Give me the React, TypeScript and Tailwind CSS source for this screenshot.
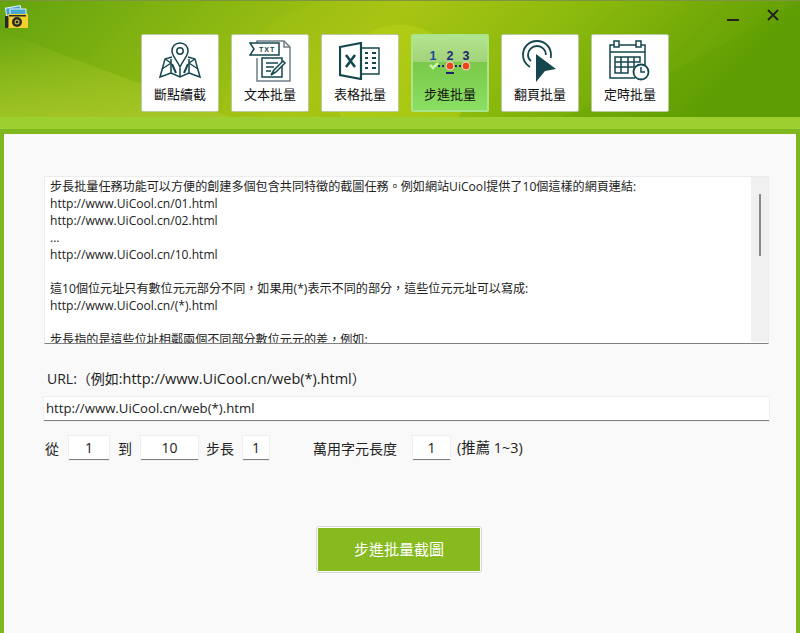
import type { ReactNode } from "react";

const stroke = "#14474e";

function MapIcon() {
  return (
    <svg width="42" height="38" viewBox="0 0 42 38" fill="none" stroke={stroke} strokeWidth="1.5">
      <path d="M21 1c-5 0-8 3.600-8 8 0 5 5 9 8 16 3-7 8-11 8-16 0-4.400-3-8-8-8z" />
      <circle cx="21" cy="9" r="3.200" />
      <path d="M13 15l-7 2-5 18 11-4 9 4 9-4 11 4-5-18-7-2" />
      <path d="M12 17v14M30 17v14M21 26v9M6 17l6 4M36 17l-6 4M3 27l9-6M39 27l-9-6" />
      <path d="M13 22l4 9M29 22l-4 9" strokeWidth="2" />
    </svg>
  );
}

function TextIcon() {
  return (
    <svg width="42" height="42" viewBox="0 0 42 42" fill="none" stroke="#6f7f84" strokeWidth="1.5">
      <path d="M8 6V1h27l6 6v34H8V18" />
      <path d="M35 1v6h6" />
      <path d="M1 3h29v12H1l4-6z" stroke={stroke} fill="#fff" />
      <text x="10" y="12" fontFamily="Liberation Sans" fontSize="7" fontWeight="700" fill={stroke} stroke="none" letterSpacing="1">TXT</text>
      <rect x="13" y="18" width="20" height="19" stroke={stroke} />
      <path d="M17 23h12M17 27h8M17 31h5" stroke={stroke} />
      <path d="M22 35l3-5 9-9 2 2-9 9z" stroke={stroke} fill="#fff" />
    </svg>
  );
}

function SheetIcon() {
  return (
    <svg width="42" height="38" viewBox="0 0 42 38" fill="none" stroke={stroke} strokeWidth="2.200">
      <path d="M1 5l21-4v36L1 33z" />
      <path d="M22 6h18v26H22" strokeWidth="1.400" />
      <path d="M7 13l9 12M16 13L7 25" strokeWidth="2.600" />
      <path d="M26 11h3M33 11h4M26 16h3M33 16h4M26 21h3M33 21h4M26 26h3M33 26h4" strokeWidth="2" />
    </svg>
  );
}

function StepIcon() {
  return (
    <svg width="44" height="26" viewBox="0 0 44 26">
      <g fontFamily="Liberation Sans" fontSize="12.500" fontWeight="700" textAnchor="middle">
        <text x="5" y="10" fill="#1d4aa0">1</text>
        <text x="22" y="10" fill="#1a2f7c">2</text>
        <text x="38" y="10" fill="#1a2470">3</text>
      </g>
      <path d="M10 16h8M27 16h7" stroke="#1a2470" strokeWidth="2" strokeDasharray="2 2" />
      <path d="M2 15l3 3 5-5" fill="none" stroke="#c9f5a8" strokeWidth="2.500" />
      <circle cx="22" cy="16" r="4" fill="#e8491b" stroke="#f7d9cc" />
      <circle cx="38" cy="16" r="4" fill="#e8491b" stroke="#f7d9cc" />
      <rect x="18" y="22" width="8" height="2" fill="#1a2470" />
    </svg>
  );
}

function ClickIcon() {
  return (
    <svg width="36" height="42" viewBox="0 0 36 42" fill="none" stroke={stroke} strokeWidth="1.800">
      <path d="M8 27C3 24 1 20 1 15 1 7 7 1 15 1s14 6 14 14c0 1-.1 2-.3 3" />
      <path d="M9 21c-2-1.500-3-3.500-3-6 0-5 4-9 9-9s9 4 9 9" />
      <path d="M14 14l20 15-11 2-9 11z" fill={stroke} stroke="none" />
    </svg>
  );
}

function CalendarIcon() {
  return (
    <svg width="42" height="42" viewBox="0 0 42 42" fill="none" stroke={stroke} strokeWidth="1.500">
      <path d="M26 38H1V5h35v20" />
      <path d="M1 12h35" />
      <rect x="5" y="1" width="5" height="6" fill="#fff" />
      <rect x="27" y="1" width="5" height="6" fill="#fff" />
      <path d="M6 17h25v5H6zM6 22h19v5H6zM6 27h13v6H6zM12 17v16M19 17v16M25 17v10" />
      <circle cx="32" cy="32" r="7.500" fill="#fff" strokeWidth="1.800" />
      <path d="M32 27v5h4" />
    </svg>
  );
}

function CameraLogo() {
  return (
    <svg width="24" height="24" viewBox="0 0 24 24">
      <rect x="2" y="3" width="15" height="8" fill="#3f9fd8" stroke="#dff0f8" transform="rotate(-10 9 7)" />
      <rect x="6" y="5" width="16" height="7" fill="#48a8d0" stroke="#dff0f8" />
      <rect x="4" y="10" width="22" height="15" rx="1" fill="#f4d02e" />
      <rect x="1" y="12" width="3.500" height="12" rx="1" fill="#27282a" />
      <rect x="5" y="11" width="17" height="1.500" fill="#27282a" />
      <circle cx="13" cy="18" r="5" fill="#2a2a20" />
      <circle cx="13" cy="18" r="2.500" fill="#c9b24a" />
      <circle cx="13" cy="18" r="1.300" fill="#222" />
    </svg>
  );
}

const tabs: { label: string; icon: ReactNode; active?: boolean }[] = [
  { label: "斷點續截", icon: <MapIcon /> },
  { label: "文本批量", icon: <TextIcon /> },
  { label: "表格批量", icon: <SheetIcon /> },
  { label: "步進批量", icon: <StepIcon />, active: true },
  { label: "翻頁批量", icon: <ClickIcon /> },
  { label: "定時批量", icon: <CalendarIcon /> },
];

function Tab({ label, icon, active }: { label: string; icon: ReactNode; active?: boolean }) {
  return (
    <div
      className={
        active
          ? "relative flex h-[78px] w-[78px] flex-col items-center overflow-hidden rounded-[2px] border-2 border-[#a9e58b] bg-gradient-to-b from-[#72bd3c] to-[#8adf62]"
          : "flex h-[78px] w-[78px] flex-col items-center rounded-[2px] border border-[#b9c9a0] bg-white"
      }
    >
      {active && <div className="absolute inset-x-0 top-0 h-[26px] bg-gradient-to-b from-[#b2e58e] to-[#a2d27a]" />}
      <div className={active ? "relative flex h-[50px] items-center pt-[3px]" : "flex h-[50px] items-center pt-[2px]"}>{icon}</div>
      <div className={active ? "relative text-[13px] leading-[17px] text-[#111]" : "relative mt-[1px] text-[13px] leading-[17px] text-[#111]"}>{label}</div>
    </div>
  );
}

function Field({ value, width }: { value: string; width: string }) {
  return (
    <div className={`flex h-[24px] items-center justify-center border-b border-[#808080] bg-white text-[14px] text-[#222] shadow-[0_0_0_1px_#efefef] ${width}`}>
      {value}
    </div>
  );
}

const helpLines = [
  "步長批量任務功能可以方便的創建多個包含共同特徵的截圖任務。例如網站UiCool提供了10個這樣的網頁連結:",
  "http://www.UiCool.cn/01.html",
  "http://www.UiCool.cn/02.html",
  "...",
  "http://www.UiCool.cn/10.html",
  "\u00a0",
  "這10個位元址只有數位元元部分不同，如果用(*)表示不同的部分，這些位元元址可以寫成:",
  "http://www.UiCool.cn/(*).html",
  "\u00a0",
  "步長指的是這些位址相鄰兩個不同部分數位元元的差，例如:",
];

export default function App() {
  return (
    <div
      className="relative flex h-[633px] w-[800px] flex-col overflow-hidden bg-[#7fb81e]"
      style={{ fontFamily: '"Open Sans", "Noto Sans CJK TC", sans-serif' }}
    >
      {/* header art */}
      <svg className="absolute left-0 top-0" width="800" height="117" viewBox="0 0 800 117" preserveAspectRatio="none">
        <defs>
          <linearGradient id="hdr" x1="0" y1="0" x2="1" y2="0.15">
            <stop offset="0" stopColor="#62a30f" />
            <stop offset="0.3" stopColor="#8db812" />
            <stop offset="0.5" stopColor="#a8c414" />
            <stop offset="0.72" stopColor="#84b60c" />
            <stop offset="1" stopColor="#4e9500" />
          </linearGradient>
          <linearGradient id="hdrLow" x1="0" y1="0" x2="0" y2="1">
            <stop offset="0" stopColor="#a8c82a" stopOpacity="0" />
            <stop offset="1" stopColor="#a8c82a" stopOpacity="0.8" />
          </linearGradient>
        </defs>
        <rect width="800" height="117" fill="url(#hdr)" />
        <path d="M0 30C100 70 160 90 230 117H0z" fill="url(#hdrLow)" />
        <path d="M220 117C230 50 270 10 330 0H800V117z" fill="#b0c816" opacity="0.2" />
        <circle cx="400" cy="90" r="65" fill="#bcd416" opacity="0.5" />
        <path d="M560 117C640 90 700 60 800 0V117z" fill="#4e9500" opacity="0.12" />
        <rect width="800" height="1" fill="#7f9440" />
      </svg>

      <div className="absolute left-[4px] top-[4px]">
        <CameraLogo />
      </div>
      <div className="absolute left-[727px] top-[19px] h-[1.500px] w-[12px] bg-[#222]" />
      <svg className="absolute left-[766px] top-[8px]" width="14" height="14" viewBox="0 0 14 14" stroke="#222" strokeWidth="1.800">
        <path d="M2 2l10 10M12 2L2 12" />
      </svg>

      <div className="relative flex h-[117px] shrink-0 gap-[12px] pl-[141px] pt-[34px]">
        {tabs.map((t) => (
          <Tab key={t.label} {...t} />
        ))}
      </div>
      <div className="relative h-[12px] shrink-0 bg-[#9ccf30]" />
      <div className="h-[5px] shrink-0 bg-[#7fb81e]" />

      <main className="mx-[4px] flex min-h-0 flex-1 flex-col bg-[#f9f9f9] pl-[40px] pr-[27px] pt-[42px] text-[14px] text-[#222]">
        <div className="flex h-[168px] shrink-0 border border-[#ececec] border-b-[#808080] bg-white pl-[1px]">
          <div className="min-w-0 flex-1 overflow-hidden whitespace-nowrap pl-[4px] pt-[1px] text-[12.100px] leading-[17px]">
            {helpLines.map((line, i) => (
              <div key={i}>{line}</div>
            ))}
          </div>
          <div className="flex h-[165px] w-[17px] shrink-0 justify-center bg-[#f0f0f0] pt-[17px]">
            <div className="ml-[1px] h-[62px] w-[2px] bg-[#8a8a8a]" />
          </div>
        </div>

        <div className="ml-[3px] mt-[25px] h-[20px] leading-[20px]">
          URL:（例如:<span className="text-[14.500px]">http://www.UiCool.cn/web(*).html</span>）
        </div>

        <div className="mt-[8px] flex h-[24px] items-center border-b border-[#808080] bg-white pl-[2px] text-[13.200px] shadow-[0_0_0_1px_#efefef]">
          http://www.UiCool.cn/web(*).html
        </div>

        <div className="mt-[15px] flex h-[24px] items-center">
          <span className="ml-[1px] w-[24px]">從</span>
          <Field value="1" width="w-[40px]" />
          <span className="ml-[9px] w-[23px]">到</span>
          <Field value="10" width="w-[57px]" />
          <span className="ml-[8px] w-[37px]">步長</span>
          <Field value="1" width="w-[26px]" />
          <span className="ml-[44px] w-[100px]">萬用字元長度</span>
          <Field value="1" width="w-[37px]" />
          <span className="ml-[7px] text-[14.400px]">(推薦 1~3)</span>
        </div>

        <div className="ml-[272px] mt-[66px] h-[47px] w-[166px] rounded-[3px] border border-[#d8d8d8] bg-white p-[1px]">
          <div className="flex h-full items-center justify-center bg-[#86ba1e] text-[15px] text-white">步進批量截圖</div>
        </div>
      </main>
    </div>
  );
}
